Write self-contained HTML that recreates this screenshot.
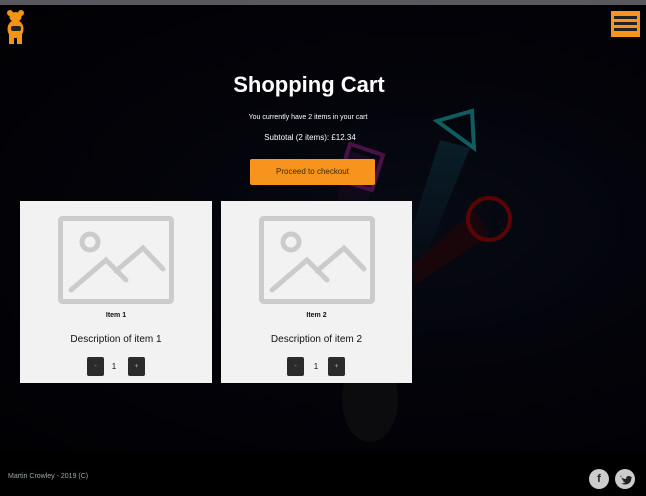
<!DOCTYPE html>
<html><head><meta charset="utf-8"><style>
*{margin:0;padding:0;box-sizing:border-box}
body{width:646px;height:496px;overflow:hidden;background:#000;position:relative;font-family:"Comic Sans MS","Liberation Sans",sans-serif;color:#fff}
.top{position:absolute;left:0;top:0;width:646px;height:5px;background:#58585e}
.bg{position:absolute;left:0;top:5px;width:646px;height:447px;background:radial-gradient(ellipse at 420px 220px,#070a14 0%,#030309 50%,#010104 100%)}
.card{position:absolute;top:201px;width:192px;height:182px;background:#f2f2f2;color:#111;text-align:center}
.card .t{position:absolute;top:111px;width:100%;font-size:7px;font-weight:bold;font-family:"Liberation Sans",sans-serif}
.card .d{position:absolute;top:133px;width:100%;font-size:10px;font-family:"Liberation Sans",sans-serif}
.btn{position:absolute;top:156px;width:17px;height:19px;background:#2b2b2b;border-radius:2px;color:#aaa;font-size:7px;line-height:19px;font-family:"Liberation Sans",sans-serif}
.q{position:absolute;top:156px;width:18px;line-height:19px;font-size:8px;font-family:"Liberation Sans",sans-serif}
.ph{position:absolute;left:38px;top:15px}
</style></head><body>
<div class="top"></div>
<div class="bg"></div>
<svg style="position:absolute;left:0;top:0" width="646" height="496">
<defs><linearGradient id="gt" x1="0" y1="0" x2="0" y2="1"><stop offset="0" stop-color="#0c2e38" stop-opacity=".6"/><stop offset="1" stop-color="#0c2e38" stop-opacity="0"/></linearGradient>
<linearGradient id="gm" x1="0" y1="0" x2="0" y2="1"><stop offset="0" stop-color="#2a0b2e" stop-opacity=".6"/><stop offset="1" stop-color="#2a0b2e" stop-opacity="0"/></linearGradient></defs>
<polygon points="440,140 470,148 420,270 405,250" fill="url(#gt)"/>
<polygon points="345,150 380,160 360,230 335,220" fill="url(#gm)"/>
<polygon points="475,210 490,235 415,285 412,265" fill="#2a0404" opacity=".5"/>
<polygon points="437,121 472,111 474,148" fill="none" stroke="#0f5d5e" stroke-width="4"/>
<polygon points="350,144 383,155 372,190 339,180" fill="none" stroke="#4a1048" stroke-width="4"/>
<circle cx="489" cy="219" r="21" fill="none" stroke="#5a0404" stroke-width="4"/>
<ellipse cx="370" cy="400" rx="28" ry="42" fill="#0c0c0f"/>
</svg>
<svg style="position:absolute;left:5px;top:9px" width="24" height="36" viewBox="0 0 24 36">
<g fill="#f39512"><circle cx="5" cy="4" r="3"/><circle cx="16" cy="4" r="3"/><ellipse cx="10.5" cy="8" rx="6" ry="5"/><ellipse cx="10.5" cy="20" rx="8" ry="9"/><rect x="4" y="24" width="5" height="11"/><rect x="12" y="24" width="5" height="11"/></g>
<rect x="6" y="17" width="10" height="5" rx="2" fill="#222"/></svg>
<div style="position:absolute;left:611px;top:11px;width:29px;height:26px;background:#f7941d;padding:5px 3px">
<div style="height:3px;background:#222;margin-bottom:3px"></div><div style="height:3px;background:#222;margin-bottom:3px"></div><div style="height:3px;background:#222"></div></div>
<div style="position:absolute;top:72px;width:618px;text-align:center;font-size:22px;font-weight:bold">Shopping Cart</div>
<div style="position:absolute;top:114px;width:616px;text-align:center;font-size:7px">You currently have 2 items in your cart</div>
<div style="position:absolute;top:133px;width:620px;text-align:center;font-size:8px">Subtotal (2 items): £12.34</div>
<div style="position:absolute;left:250px;top:159px;width:125px;height:26px;background:#f7941d;border-radius:2px;color:#3a2a10;font-size:8px;text-align:center;line-height:26px">Proceed to checkout</div>
<div class="card" style="left:20px">
<svg class="ph" width="116" height="88" viewBox="0 0 116 88"><g fill="none" stroke="#cbcbcb" stroke-width="5" stroke-linecap="round"><rect x="2.5" y="2.5" width="111" height="83" rx="2"/><circle cx="32" cy="26" r="8"/><polyline points="13,74 48,44 68,64"/><polyline points="58,55 85,32 105,53"/></g></svg>
<div class="t">Item 1</div><div class="d">Description of item 1</div>
<div class="btn" style="left:67px">-</div><div class="q" style="left:85px">1</div><div class="btn" style="left:108px">+</div></div>
<div class="card" style="left:221px;width:191px">
<svg class="ph" width="116" height="88" viewBox="0 0 116 88"><g fill="none" stroke="#cbcbcb" stroke-width="5" stroke-linecap="round"><rect x="2.5" y="2.5" width="111" height="83" rx="2"/><circle cx="32" cy="26" r="8"/><polyline points="13,74 48,44 68,64"/><polyline points="58,55 85,32 105,53"/></g></svg>
<div class="t">Item 2</div><div class="d">Description of item 2</div>
<div class="btn" style="left:66px">-</div><div class="q" style="left:86px">1</div><div class="btn" style="left:107px">+</div></div>
<div style="position:absolute;left:8px;top:473px;font-size:7px;color:#9aa;">Martin Crowley - 2019 (C)</div>
<div style="position:absolute;left:589px;top:469px;width:20px;height:20px;border-radius:50%;background:#ccc;color:#222;font:bold 11px 'Liberation Sans',sans-serif;text-align:center;line-height:20px">f</div>
<svg style="position:absolute;left:615px;top:469px" width="20" height="20" viewBox="0 0 20 20"><circle cx="10" cy="10" r="10" fill="#ccc"/><path d="M5 7c2 2 4 3 6 3 0-2 1-3 3-3 1 0 1.5.5 2 1l1-.5-.7 1.2.8-.2-.8 1c0 4-3 6-6 6-1.5 0-3-.5-4-1 1.5 0 3-.5 4-1.2-1.3 0-2.3-.8-2.6-1.8h1.2C7.5 11 6.6 10 6.6 9c.3.2.8.3 1.2.3C6.5 8.5 6 7.7 6.4 6.6z" fill="#222"/></svg>
</body></html>
